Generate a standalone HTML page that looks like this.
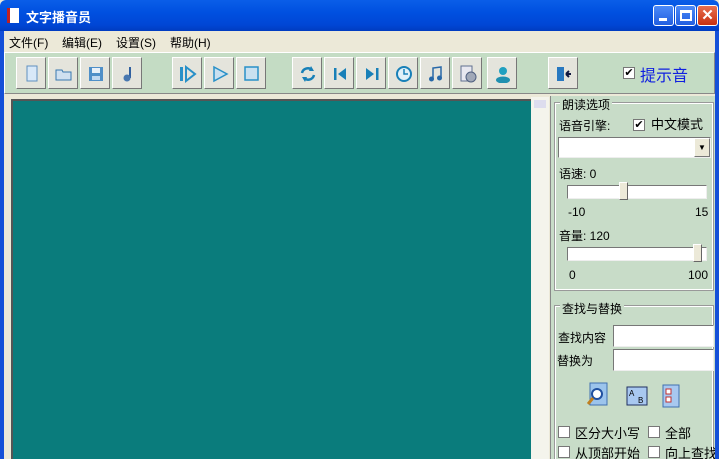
<!DOCTYPE html>
<html><head><meta charset="utf-8"><style>
*{box-sizing:border-box;margin:0;padding:0}
html,body{width:719px;height:459px;overflow:hidden}
body{position:relative;background:#ece9d8;font-family:"Liberation Sans","Noto Sans CJK SC",sans-serif;font-size:12px;color:#000;white-space:nowrap}
.abs{position:absolute}
.title{left:0;top:0;width:719px;height:31px;background:linear-gradient(#0a5ee8,#0050e0 40%,#0046d5 80%,#003cc0);border-radius:6px 6px 0 0}
.title .t{left:26px;top:7px;color:#fff;font-weight:bold;font-size:13px}
.wb{top:5px;width:21px;height:21px;border:1px solid #fff;border-radius:3px;background:linear-gradient(#4b8af8,#225ee0)}
.menu{left:4px;top:31px;width:711px;height:20px;background:#ece9d8}
.menu span{position:absolute;top:3px;font-size:12px}
.tb{left:4px;top:52px;width:711px;height:42px;background:#c4dcc4;border:1px solid #fff;border-right-color:#888;border-bottom-color:#888}
.btn{top:4px;width:30px;height:32px;background:#e4e4dc;border:1px solid #fff;border-right-color:#777;border-bottom-color:#777}
.btn svg{position:absolute;left:6px;top:7px}
.side{left:0;top:94px;width:4px;height:365px;background:#1450d8}
.sider{left:715px;top:31px;width:4px;height:428px;background:#1450d8}
.teal{left:11px;top:99px;width:520px;height:360px;background:#0a7c7c;border-top:2px solid #555;border-left:2px solid #555}
.strip{left:531px;top:97px;width:18px;height:362px;background:#f4f4ec}
.panel{left:550px;top:96px;width:165px;height:363px;background:#c8dcc8;border-left:1px solid #888;overflow:hidden}
.fs{position:absolute;border:1px solid #fff;outline:1px solid #999}
.cb{position:absolute;width:12px;height:12px;background:#fff;border:1px solid #777}
.inp{position:absolute;background:#fff;border:1px solid #777;border-right-color:#eee;border-bottom-color:#eee}
</style></head><body>
<div class="abs title">
 <div class="abs" style="left:7px;top:8px;width:12px;height:15px;background:#fff;border-left:3px solid #c02020"></div>
 <div class="abs t">文字播音员</div>
 <div class="abs wb" style="left:653px"><div class="abs" style="left:5px;top:12px;width:8px;height:3px;background:#fff"></div></div>
 <div class="abs wb" style="left:675px"><div class="abs" style="left:4px;top:4px;width:12px;height:11px;border:2px solid #fff;border-top-width:3px"></div></div>
 <div class="abs wb" style="left:697px;width:21px;background:linear-gradient(#e87050,#c83010);color:#fff;font-weight:bold;font-size:15px;text-align:center;line-height:19px">✕</div>
</div>
<div class="abs side"></div><div class="abs sider"></div>
<div class="abs" style="left:0;top:31px;width:4px;height:65px;background:#1450d8"></div>
<div class="abs menu">
 <span style="left:5px">文件(F)</span><span style="left:58px">编辑(E)</span><span style="left:112px">设置(S)</span><span style="left:166px">帮助(H)</span>
</div>
<div class="abs tb">
 <div class="abs btn" style="left:11px"><svg width="18" height="18"><rect x="4" y="1" width="10" height="15" fill="#d8e8f8" stroke="#6090c0"/></svg></div>
 <div class="abs btn" style="left:43px"><svg width="18" height="18"><path d="M1 5h6l1 2h8v8H1z" fill="#cfe0f0" stroke="#3878b0"/></svg></div>
 <div class="abs btn" style="left:75px"><svg width="18" height="18"><rect x="2" y="2" width="14" height="14" fill="#4f8fc8"/><rect x="5" y="3" width="8" height="5" fill="#e8f0f8"/><rect x="5" y="11" width="8" height="4" fill="#c0d8f0"/></svg></div>
 <div class="abs btn" style="left:107px"><svg width="18" height="18"><path d="M11 2v11" stroke="#3060a0" stroke-width="2"/><circle cx="8" cy="13" r="3.5" fill="#4878b0"/></svg></div>
 <div class="abs btn" style="left:167px"><svg width="18" height="18"><rect x="1" y="2" width="3" height="14" fill="#2890c8"/><path d="M7 2l9 7-9 7z" fill="none" stroke="#2890c8" stroke-width="2"/></svg></div>
 <div class="abs btn" style="left:199px"><svg width="18" height="18"><path d="M3 2l13 7-13 7z" fill="#c8e0f0" stroke="#2890c8" stroke-width="1.5"/></svg></div>
 <div class="abs btn" style="left:231px"><svg width="18" height="18"><rect x="2" y="2" width="13" height="13" fill="#c8e0f0" stroke="#2890c8" stroke-width="1.5"/></svg></div>
 <div class="abs btn" style="left:287px"><svg width="18" height="18"><path d="M3 8a6 6 0 0 1 10-3M15 10a6 6 0 0 1-10 3" fill="none" stroke="#1880b8" stroke-width="2.5"/><path d="M12 1l3 5-5 0z M6 17l-3-5 5 0z" fill="#1880b8"/></svg></div>
 <div class="abs btn" style="left:319px"><svg width="18" height="18"><rect x="3" y="3" width="2.5" height="12" fill="#1880b8"/><path d="M15 3v12l-8-6z" fill="#1880b8"/></svg></div>
 <div class="abs btn" style="left:351px"><svg width="18" height="18"><rect x="13" y="3" width="2.5" height="12" fill="#1880b8"/><path d="M3 3v12l8-6z" fill="#1880b8"/></svg></div>
 <div class="abs btn" style="left:383px"><svg width="18" height="18"><circle cx="9" cy="9" r="7" fill="#e0f0f8" stroke="#1880b8" stroke-width="2"/><path d="M9 4v5h4" stroke="#1880b8" stroke-width="1.5" fill="none"/></svg></div>
 <div class="abs btn" style="left:415px"><svg width="18" height="18"><path d="M6 14V3l8-1v11" fill="none" stroke="#2868a8" stroke-width="1.5"/><circle cx="4.5" cy="14" r="2.5" fill="#2868a8"/><circle cx="12.5" cy="13" r="2.5" fill="#2868a8"/></svg></div>
 <div class="abs btn" style="left:447px"><svg width="18" height="18"><rect x="2" y="1" width="11" height="15" fill="#e8e8f0" stroke="#607090"/><circle cx="12" cy="12" r="5" fill="#a0a8b8" stroke="#506080"/></svg></div>
 <div class="abs btn" style="left:482px"><svg width="18" height="18"><circle cx="9" cy="6" r="4" fill="#20a0c0"/><ellipse cx="9" cy="15" rx="7" ry="3.5" fill="#2090b0"/></svg></div>
 <div class="abs btn" style="left:543px"><svg width="18" height="18"><path d="M2 2h7v14H2z" fill="#2878c0"/><path d="M16 9h-5M11 9l3-3M11 9l3 3" stroke="#101840" stroke-width="2"/></svg></div>
 <div class="cb" style="left:618px;top:14px;font-size:11px;line-height:10px;text-align:center">✔</div>
 <div class="abs" style="left:635px;top:9px;color:#1020e0;font-size:16px">提示音</div>
</div>
<div class="abs teal"></div>
<div class="abs strip"><div class="abs" style="left:3px;top:3px;width:12px;height:8px;background:#dde"></div></div>
<div class="abs panel">
 <div class="fs" style="left:4px;top:7px;width:158px;height:187px"></div>
 <div class="abs" style="left:9px;top:0px;background:#c8dcc8;padding:0 2px">朗读选项</div>
 <div class="abs" style="left:8px;top:21px">语音引擎:</div>
 <div class="cb" style="left:82px;top:23px;font-size:11px;line-height:10px;text-align:center">✔</div>
 <div class="abs" style="left:100px;top:18px;font-size:13px">中文模式</div>
 <div class="inp" style="left:7px;top:41px;width:153px;height:21px"><div class="abs" style="right:0;top:0;width:16px;height:19px;background:#ece9d8;border:1px solid #fff;border-right-color:#777;border-bottom-color:#777;font-size:8px;text-align:center;line-height:18px">▼</div></div>
 <div class="abs" style="left:8px;top:69px">语速: 0</div>
 <div class="inp" style="left:16px;top:89px;width:140px;height:14px"></div>
 <div class="abs" style="left:68px;top:86px;width:9px;height:18px;background:#ece9d8;border:1px solid #fff;border-right-color:#666;border-bottom-color:#666"></div>
 <div class="abs" style="left:17px;top:109px">-10</div>
 <div class="abs" style="left:144px;top:109px">15</div>
 <div class="abs" style="left:8px;top:131px">音量: 120</div>
 <div class="inp" style="left:16px;top:151px;width:140px;height:14px"></div>
 <div class="abs" style="left:142px;top:148px;width:9px;height:18px;background:#ece9d8;border:1px solid #fff;border-right-color:#666;border-bottom-color:#666"></div>
 <div class="abs" style="left:18px;top:172px">0</div>
 <div class="abs" style="left:137px;top:172px">100</div>
 <div class="fs" style="left:4px;top:210px;width:158px;height:170px"></div>
 <div class="abs" style="left:9px;top:204px;background:#c8dcc8;padding:0 2px">查找与替换</div>
 <div class="abs" style="left:7px;top:233px">查找内容</div>
 <div class="inp" style="left:62px;top:229px;width:101px;height:22px"></div>
 <div class="abs" style="left:6px;top:256px">替换为</div>
 <div class="inp" style="left:62px;top:253px;width:101px;height:22px"></div>
 <svg class="abs" style="left:36px;top:286px" width="22" height="24"><rect x="3" y="1" width="17" height="22" fill="#9cc4ec" stroke="#4070b0"/><circle cx="10" cy="12" r="5" fill="#fff" stroke="#2050a0" stroke-width="2"/><path d="M6 16l-5 6" stroke="#c08020" stroke-width="3"/></svg>
 <svg class="abs" style="left:75px;top:290px" width="22" height="20"><rect x="1" y="1" width="20" height="18" fill="#a8c8f0" stroke="#203060"/><text x="3" y="10" font-size="8" font-family="Liberation Sans">A</text><text x="12" y="17" font-size="8" font-family="Liberation Sans">B</text></svg>
 <svg class="abs" style="left:110px;top:288px" width="20" height="24"><rect x="2" y="1" width="16" height="22" fill="#a8c8f0" stroke="#4070b0"/><rect x="5" y="5" width="5" height="5" fill="#fff" stroke="#c03030"/><rect x="5" y="13" width="5" height="5" fill="#fff" stroke="#c03030"/></svg>
 <div class="cb" style="left:7px;top:330px"></div><div class="abs" style="left:24px;top:327px;font-size:13px">区分大小写</div>
 <div class="cb" style="left:97px;top:330px"></div><div class="abs" style="left:114px;top:327px;font-size:13px">全部</div>
 <div class="cb" style="left:7px;top:350px"></div><div class="abs" style="left:24px;top:347px;font-size:13px">从顶部开始</div>
 <div class="cb" style="left:97px;top:350px"></div><div class="abs" style="left:114px;top:347px;font-size:13px">向上查找</div>
</div>
</body></html>
